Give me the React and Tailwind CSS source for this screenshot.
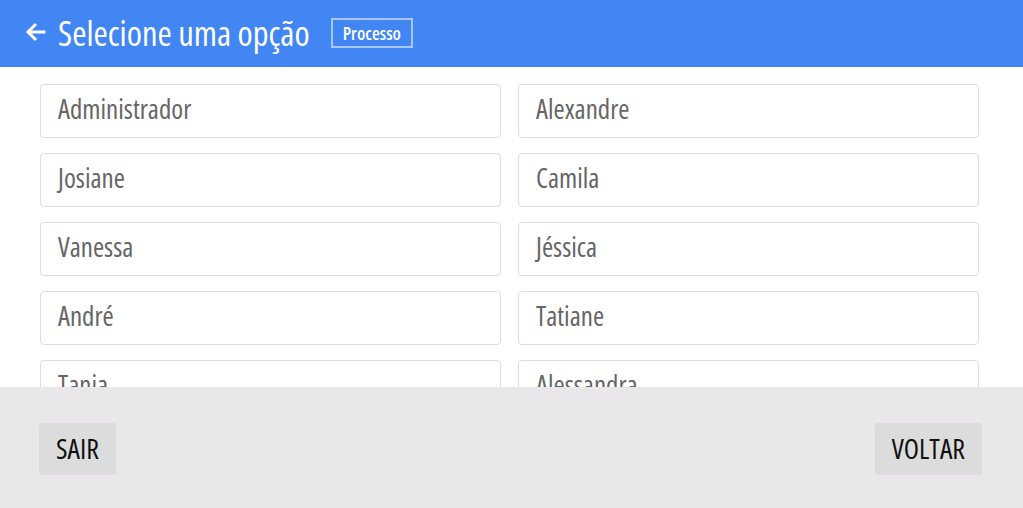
import React from "react";

const names = [
  "Administrador",
  "Alexandre",
  "Josiane",
  "Camila",
  "Vanessa",
  "Jéssica",
  "André",
  "Tatiane",
  "Tania",
  "Alessandra",
];

export default function App() {
  return (
    <div className="w-[1023px] h-[508px] flex flex-col bg-white overflow-hidden font-['Open_Sans',sans-serif] [font-stretch:75%]">
      {/* header */}
      <div className="h-[67px] shrink-0 bg-[#4286f4] flex items-center pl-[25px]">
        <svg width="21" height="20" viewBox="0 0 21 20" fill="none" stroke="white" strokeWidth="3" strokeLinecap="square" className="mb-[4px]">
          <path d="M19 10H4" />
          <path d="M10 3l-7 7 7 7" />
        </svg>
        <h1 className="ml-[12px] text-white text-[34.5px] leading-none">Selecione uma opção</h1>
        <span className="ml-[21px] mb-[2px] border-2 border-[#a9c6f8] text-white text-[18px] font-semibold leading-none px-[10px] py-[4px]">
          Processo
        </span>
      </div>

      {/* list */}
      <div className="h-[320px] shrink-0 overflow-hidden pt-[17px] pl-[40px] pr-[44px]">
        <div className="grid grid-cols-2 gap-x-[17px] gap-y-[15px]">
          {names.map((n) => (
            <div
              key={n}
              className="h-[54px] border border-[#dedede] rounded-[4px] flex items-center pl-[17px] pb-[3px] text-[27px] text-[#666666]"
            >
              {n}
            </div>
          ))}
        </div>
      </div>

      {/* footer */}
      <div className="flex-1 bg-[#e9e7ea] flex items-start justify-between pt-[36px] pl-[39px] pr-[41px]">
        <button className="h-[52px] px-[17px] pb-[2px] bg-[#dcdcdc] rounded-[2px] text-[28px] text-[#111]">SAIR</button>
        <button className="h-[52px] px-[17px] pb-[2px] bg-[#dcdcdc] rounded-[2px] text-[28px] text-[#111]">VOLTAR</button>
      </div>
    </div>
  );
}
